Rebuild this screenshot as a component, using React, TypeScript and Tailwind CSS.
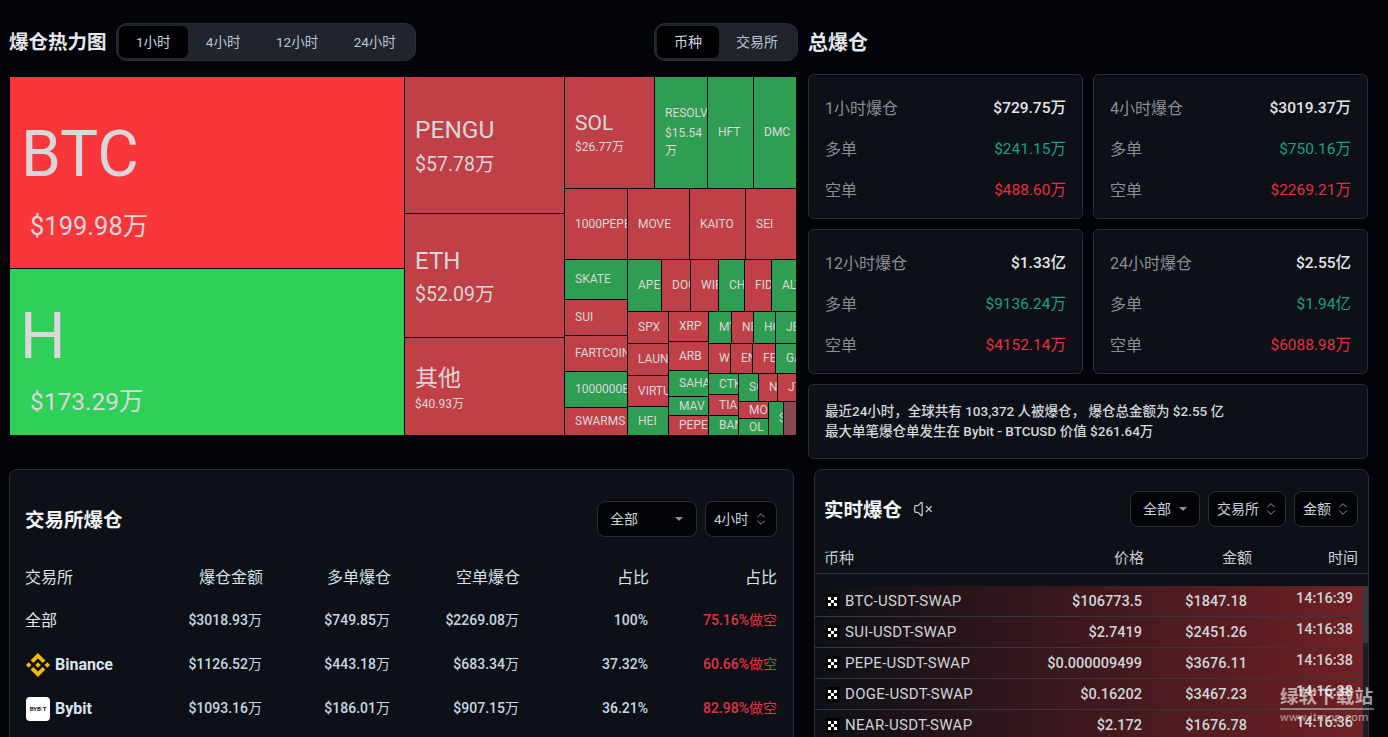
import { ChevronsUpDown, VolumeX } from "lucide-react";

const R = "#bf4147";
const G = "#2f9e52";

type Label = { t: string; x: number; y: number; s: number };
type Tile = { n: string; b: [number, number, number, number]; c: string; labels?: Label[] };

const tiles: Tile[] = [
  { n: "BTC", b: [10, 77, 404, 268], c: "#f9373b", labels: [{ t: "BTC", x: 21, y: 155, s: 64 }, { t: "$199.98万", x: 30, y: 226.5, s: 25.5 }] },
  { n: "H", b: [10, 269, 404, 435], c: "#2fd059", labels: [{ t: "H", x: 20, y: 337, s: 64 }, { t: "$173.29万", x: 30, y: 402, s: 24.5 }] },
  { n: "PENGU", b: [405, 77, 564, 213], c: R, labels: [{ t: "PENGU", x: 415, y: 130, s: 24.5 }, { t: "$57.78万", x: 415, y: 165, s: 19.5 }] },
  { n: "ETH", b: [405, 214, 564, 337], c: R, labels: [{ t: "ETH", x: 415, y: 261, s: 24 }, { t: "$52.09万", x: 415, y: 295, s: 19.5 }] },
  { n: "其他", b: [405, 338, 564, 435], c: R, labels: [{ t: "其他", x: 415, y: 378, s: 23 }, { t: "$40.93万", x: 415, y: 404, s: 12 }] },
  { n: "SOL", b: [565, 77, 654, 188], c: R, labels: [{ t: "SOL", x: 575, y: 123, s: 21 }, { t: "$26.77万", x: 575, y: 147, s: 12 }] },
  { n: "RESOLV", b: [655, 77, 707, 188], c: G, labels: [{ t: "RESOLV", x: 665, y: 113, s: 12 }, { t: "$15.54", x: 665, y: 133, s: 12 }, { t: "万", x: 665, y: 151, s: 12 }] },
  { n: "HFT", b: [708, 77, 753, 188], c: G },
  { n: "DMC", b: [754, 77, 796, 188], c: G },
  { n: "1000PEPE", b: [565, 189, 627, 259], c: R },
  { n: "MOVE", b: [628, 189, 689, 259], c: R },
  { n: "KAITO", b: [690, 189, 745, 259], c: R },
  { n: "SEI", b: [746, 189, 796, 259], c: R },
  { n: "SKATE", b: [565, 260, 627, 299], c: G },
  { n: "SUI", b: [565, 300, 627, 335], c: R },
  { n: "FARTCOIN", b: [565, 336, 627, 371], c: R },
  { n: "1000000BOB", b: [565, 372, 627, 407], c: G },
  { n: "SWARMS", b: [565, 408, 627, 435], c: R },
  { n: "APE", b: [628, 260, 661, 311], c: G },
  { n: "DOGE", b: [662, 260, 690, 311], c: R },
  { n: "WIF", b: [691, 260, 718, 311], c: R },
  { n: "CHZ", b: [719, 260, 744, 311], c: G },
  { n: "FIDA", b: [745, 260, 771, 311], c: R },
  { n: "ALT", b: [772, 260, 796, 311], c: G },
  { n: "SPX", b: [628, 312, 668, 343], c: R },
  { n: "LAUNCH", b: [628, 344, 668, 375], c: R },
  { n: "VIRTUAL", b: [628, 376, 668, 406], c: R },
  { n: "HEI", b: [628, 407, 668, 435], c: G },
  { n: "XRP", b: [669, 312, 708, 341], c: R },
  { n: "ARB", b: [669, 342, 708, 370], c: R },
  { n: "SAHARA", b: [669, 371, 708, 396], c: G },
  { n: "MAV", b: [669, 397, 708, 415], c: G },
  { n: "PEPE", b: [669, 416, 708, 435], c: R },
  { n: "MYX", b: [709, 312, 731, 343], c: G },
  { n: "NEAR", b: [732, 312, 753, 343], c: R },
  { n: "HOME", b: [754, 312, 775, 343], c: G },
  { n: "JELLY", b: [776, 312, 796, 343], c: G },
  { n: "W", b: [709, 344, 730, 373], c: R },
  { n: "ENA", b: [731, 344, 752, 373], c: R },
  { n: "FET", b: [753, 344, 775, 373], c: R },
  { n: "GALA", b: [776, 344, 796, 373], c: G },
  { n: "CTK", b: [709, 374, 738, 394], c: G },
  { n: "TIA", b: [709, 395, 738, 415], c: R },
  { n: "BANK", b: [709, 416, 738, 435], c: G },
  { n: "SOON", b: [739, 374, 758, 401], c: G },
  { n: "NXPC", b: [759, 374, 777, 401], c: R },
  { n: "JTO", b: [778, 374, 796, 401], c: R },
  { n: "MOODENG", b: [739, 402, 768, 418], c: R },
  { n: "OL", b: [739, 419, 768, 435], c: G },
  { n: "SUSHI", b: [769, 402, 783, 435], c: G },
  { n: "", b: [784, 402, 796, 435], c: "#8a4653" },
];

function Treemap() {
  return (
    <div className="relative ml-[1px] mt-[16px] h-[358px] w-[786px] overflow-hidden text-[#dad6d9]">
      {tiles.map((t) => {
        const [x0, y0, x1, y1] = t.b;
        return (
          <div
            key={t.n + x0}
            className="absolute flex items-center overflow-hidden whitespace-nowrap pb-[1px] pl-[10px] text-[12px]"
            style={{ left: x0 - 10, top: y0 - 77, width: x1 - x0, height: y1 - y0, backgroundColor: t.c }}
          >
            {t.labels
              ? t.labels.map((l) => (
                  <span
                    key={l.t}
                    className="absolute leading-none"
                    style={{ left: l.x - x0, top: l.y - y0 - l.s / 2, fontSize: l.s, lineHeight: `${l.s}px` }}
                  >
                    {l.t}
                  </span>
                ))
              : t.n}
          </div>
        );
      })}
    </div>
  );
}

function Tabs({ items, w, size, first, rest }: { items: string[]; w: string; size: string; first: string; rest: string }) {
  return (
    <div className={`flex h-[38px] shrink-0 items-center whitespace-nowrap rounded-[11px] border border-[#2a2e36] bg-[#20242c] p-[2px] ${w} ${size}`}>
      {items.map((t, i) => (
        <div
          key={t}
          className={
            i === 0
              ? `flex h-[32px] items-center rounded-[6px] bg-black text-[#cdd6e2] ${first}`
              : `flex h-[32px] items-center text-[#b9c5d6] ${rest}`
          }
        >
          {t}
        </div>
      ))}
    </div>
  );
}

function Caret() {
  return <span className="h-0 w-0 border-x-[4px] border-t-[4px] border-x-transparent border-t-[#8f9399]" />;
}

function Select({ label, w, up, px, size = "text-[14px]" }: { label: string; w: string; up?: boolean; px: string; size?: string }) {
  return (
    <div className={`flex h-[36px] items-center justify-between rounded-[8px] border border-[#2b2e35] bg-[#030407] text-[#c9d3de] ${size} ${w} ${px}`}>
      <span>{label}</span>
      {up ? <ChevronsUpDown size={16} strokeWidth={1.5} className="text-[#8f9399]" /> : <Caret />}
    </div>
  );
}

function Val({ v }: { v: string }) {
  const m = v.match(/^(.*?)([\u4e00-\u9fff]+)$/);
  return m ? (
    <>
      <span className="font-medium">{m[1]}</span>
      {m[2]}
    </>
  ) : (
    <span className="font-medium">{v}</span>
  );
}

function StatCard({ title, total, long, short }: { title: string; total: string; long: string; short: string }) {
  return (
    <div className="flex h-[145px] flex-col justify-between rounded-[6px] border border-[#2a2e36] bg-[#0d1017] pb-[16px] pl-[16px] pr-[16px] pt-[23px] text-[16px]">
      <div className="flex h-[22px] items-center justify-between">
        <span className="text-[#8a8e95]">{title}</span>
        <span className="text-[15.5px] font-medium text-[#e4e6e9]">{total}</span>
      </div>
      <div className="flex h-[22px] items-center justify-between">
        <span className="text-[#8a8e95]">多单</span>
        <span className="text-[15.5px] text-[#1b9f85]">{long}</span>
      </div>
      <div className="flex h-[22px] items-center justify-between">
        <span className="text-[#8a8e95]">空单</span>
        <span className="text-[15.5px] text-[#e5303f]">{short}</span>
      </div>
    </div>
  );
}

function Binance() {
  return (
    <svg viewBox="0 0 126.61 126.61" className="h-[24px] w-[24px]" fill="#f0b90b">
      <path d="M38.73 53.2l24.59-24.58 24.6 24.6 14.3-14.31L63.32 0 24.43 38.9zM0 63.31l14.3-14.31 14.31 14.31-14.31 14.3zM38.73 73.41l24.59 24.59 24.6-24.6 14.31 14.29-38.9 38.91-38.91-38.88v-.02zM98 63.31l14.3-14.31 14.31 14.3-14.31 14.32zM77.83 63.3l-14.51-14.52-10.73 10.73-1.24 1.23-2.54 2.54 14.51 14.5 14.51-14.47z" />
    </svg>
  );
}

function Bybit() {
  return (
    <div className="flex h-[24px] w-[24px] items-center justify-center rounded-[4px] bg-white text-[6px] font-bold leading-none text-[#15192a]">
      BYB<span className="text-[#f7a600]">I</span>T
    </div>
  );
}

function Okx() {
  return (
    <svg viewBox="0 0 15 15" className="h-[15px] w-[15px] shrink-0">
      <rect width="15" height="15" rx="3" fill="#000" />
      <g fill="#fff">
        <rect x="3" y="3" width="3" height="3" />
        <rect x="9" y="3" width="3" height="3" />
        <rect x="6" y="6" width="3" height="3" />
        <rect x="3" y="9" width="3" height="3" />
        <rect x="9" y="9" width="3" height="3" />
      </g>
    </svg>
  );
}

const exRows: { name: React.ReactNode; v: string[] }[] = [
  { name: <span className="-ml-[1px] block translate-y-[1px] text-[16px] text-[#e3e8ee]">全部</span>, v: ["$3018.93万", "$749.85万", "$2269.08万", "100%", "75.16%做空"] },
  {
    name: (
      <span className="flex translate-y-[1px] items-center gap-[5px] text-[16px] font-bold text-[#dbe5ee]">
        <Binance />
        Binance
      </span>
    ),
    v: ["$1126.52万", "$443.18万", "$683.34万", "37.32%", "60.66%做空"],
  },
  {
    name: (
      <span className="flex translate-y-[1px] items-center gap-[5px] text-[16px] font-bold text-[#dbe5ee]">
        <Bybit />
        Bybit
      </span>
    ),
    v: ["$1093.16万", "$186.01万", "$907.15万", "36.21%", "82.98%做空"],
  },
];

const live = [
  ["BTC-USDT-SWAP", "$106773.5", "$1847.18", "14:16:39"],
  ["SUI-USDT-SWAP", "$2.7419", "$2451.26", "14:16:38"],
  ["PEPE-USDT-SWAP", "$0.000009499", "$3676.11", "14:16:38"],
  ["DOGE-USDT-SWAP", "$0.16202", "$3467.23", "14:16:38"],
  ["NEAR-USDT-SWAP", "$2.172", "$1676.78", "14:16:36"],
];

export default function App() {
  return (
    <div className="relative flex h-[737px] w-[1388px] gap-[10px] overflow-hidden bg-[#02040a] pl-[9px] font-[Roboto,'Noto_Sans_CJK_SC',sans-serif]">
      <div className="w-[789px] shrink-0 pt-[23px]">
        <div className="flex h-[38px] items-center justify-between">
          <div className="flex items-center gap-[9px]">
            <h1 className="translate-y-[1px] text-[19.5px] font-bold text-[#e6e8eb]">爆仓热力图</h1>
            <Tabs items={["1小时", "4小时", "12小时", "24小时"]} w="w-[300px]" size="text-[13.5px]" first="px-[17.5px]" rest="px-[17.75px]" />
          </div>
          <Tabs items={["币种", "交易所"]} w="w-[144px]" size="text-[14px]" first="px-[17px]" rest="px-[17px]" />
        </div>
        <Treemap />
        <div className="mt-[34px] h-[320px] w-[785px] rounded-[8px] border border-[#2a2e36] bg-[#0d1017] pl-[16px] pr-[15px] pt-[31px]">
          <div className="mr-[1px] flex h-[36px] items-center justify-between">
            <h2 className="-ml-[1px] translate-y-[2px] text-[19.5px] font-bold text-[#f2f4f6]">交易所爆仓</h2>
            <div className="flex gap-[8px]">
              <Select label="全部" w="w-[100px]" px="pl-[12px] pr-[13px]" />
              <Select label="4小时" w="w-[72px]" up px="pl-[8px] pr-[7px]" size="text-[13.5px]" />
            </div>
          </div>
          <div className="mt-[18px] grid h-[44px] translate-y-[1px] grid-cols-[109px_128px_128px_129px_129px_128px] items-center text-right text-[16px] text-[#d9e0e7]">
            <span className="-ml-[1px] text-left">交易所</span>
            <span>爆仓金额</span>
            <span>多单爆仓</span>
            <span>空单爆仓</span>
            <span>占比</span>
            <span>占比</span>
          </div>
          {exRows.map((r, i) => (
            <div key={i} className="grid h-[44px] grid-cols-[109px_128px_128px_129px_129px_128px] items-center pb-[2px] text-right text-[14px] text-[#c8d6e2]">
              <span className="text-left">{r.name}</span>
              {r.v.map((c, j) => (
                <span key={j} className={j === 4 ? "text-[#e5303f]" : "pr-[1px]"}>
                  <Val v={c} />
                </span>
              ))}
            </div>
          ))}
        </div>
      </div>

      <div className="w-[561px] shrink-0 pt-[23px]">
        <h2 className="flex h-[38px] translate-y-[1px] items-center text-[20px] font-bold text-[#e6e8eb]">总爆仓</h2>
        <div className="mt-[13px] grid w-[560px] grid-cols-2 gap-[10px]">
          <StatCard title="1小时爆仓" total="$729.75万" long="$241.15万" short="$488.60万" />
          <StatCard title="4小时爆仓" total="$3019.37万" long="$750.16万" short="$2269.21万" />
          <StatCard title="12小时爆仓" total="$1.33亿" long="$9136.24万" short="$4152.14万" />
          <StatCard title="24小时爆仓" total="$2.55亿" long="$1.94亿" short="$6088.98万" />
        </div>
        <div className="mt-[10px] flex h-[75px] w-[560px] flex-col justify-center rounded-[6px] border border-[#2a2e36] bg-[#0d1017] px-[16px] pb-[2px] text-[13.5px] font-medium leading-[20px] text-[#d4d7db]">
          <p>最近24小时，全球共有 103,372 人被爆仓， 爆仓总金额为 $2.55 亿</p>
          <p>最大单笔爆仓单发生在 Bybit - BTCUSD 价值 $261.64万</p>
        </div>
        <div className="ml-[6px] mt-[10px] h-[300px] w-[555px] rounded-[8px] border border-[#2a2e36] bg-[#0d1017] pt-[21px]">
          <div className="flex h-[36px] items-center justify-between pl-[10px] pr-[10px]">
            <div className="flex items-center gap-[11px]">
              <h2 className="-ml-[1px] translate-y-[2px] text-[19.5px] font-bold text-[#f4f6f8]">实时爆仓</h2>
              <VolumeX size={20} strokeWidth={1.5} className="text-[#c6c9cd]" />
            </div>
            <div className="flex gap-[8px]">
              <Select label="全部" w="w-[70px]" px="px-[12px]" />
              <Select label="交易所" w="w-[78px]" up px="pl-[8px] pr-[6px]" />
              <Select label="金额" w="w-[64px]" up px="pl-[8px] pr-[6px]" />
            </div>
          </div>
          <div className="mt-[16px] box-content grid h-[30px] grid-cols-[200px_119px_108px_106px] items-center border-b border-[#2a2e36] pl-[10px] pr-[10px] text-right text-[15px] text-[#c9cdd2]">
            <span className="-ml-[1px] text-left">币种</span>
            <span>价格</span>
            <span>金额</span>
            <span>时间</span>
          </div>
          <div className="relative mt-[12px] overflow-hidden pr-[5px]">
            {live.map((r) => (
              <div
                key={r[0]}
                className="grid h-[31px] grid-cols-[200px_117px_105px_106px] items-center border-b border-[#363840] bg-linear-to-r from-transparent to-[#702125] pl-[10px] pt-[1px] text-right text-[14.5px] font-medium text-[#d0d3d7]"
              >
                <span className="flex items-center gap-[5px] text-left text-[15px] font-normal tracking-[0.3px]">
                  <Okx />
                  {r[0]}
                </span>
                <span>{r[1]}</span>
                <span>{r[2]}</span>
                <span className="-translate-y-[3px]">{r[3]}</span>
              </div>
            ))}
            <div className="absolute bottom-0 right-0 top-0 w-[5px] bg-[#1b1e25]">
              <div className="h-[57px] w-full bg-[#37393c]" />
            </div>
          </div>
        </div>
      </div>

      <div className="absolute left-[1280px] top-[686px] w-[94px] text-white/60">
        <div className="whitespace-nowrap border-b-2 border-white/40 text-[18.6px] font-bold leading-[22px]">绿软下载站</div>
        <div className="whitespace-nowrap text-[11.5px] leading-[14px] tracking-[0.4px] text-white/55">www.itmop.com</div>
      </div>
    </div>
  );
}
